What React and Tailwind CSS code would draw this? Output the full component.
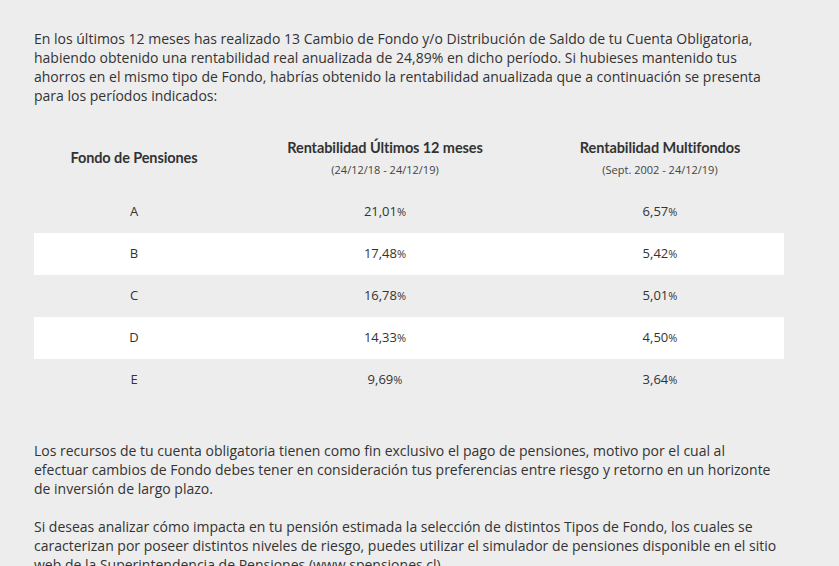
import React from 'react';

const rows = [
    { fondo: 'A', ultimos: '21,01', multi: '6,57' },
    { fondo: 'B', ultimos: '17,48', multi: '5,42' },
    { fondo: 'C', ultimos: '16,78', multi: '5,01' },
    { fondo: 'D', ultimos: '14,33', multi: '4,50' },
    { fondo: 'E', ultimos: '9,69', multi: '3,64' },
];

const Pct = ({ value }) => (
    <span>
        {value}
        <span className="text-[11px]">%</span>
    </span>
);

export default function App() {
    return (
        <div className="min-h-[566px] w-full overflow-hidden bg-[#ededed] font-['Open_Sans',sans-serif] text-[#333]">
            <div className="w-[760px] ml-[34px] pt-[29px]">
                <p className="text-[14px] leading-[19px]">
                    En los últimos 12 meses has realizado 13 Cambio de Fondo y/o Distribución de Saldo de tu Cuenta Obligatoria,<br />
                    habiendo obtenido una rentabilidad real anualizada de 24,89% en dicho período. Si hubieses mantenido tus<br />
                    ahorros en el mismo tipo de Fondo, habrías obtenido la rentabilidad anualizada que a continuación se presenta<br />
                    para los períodos indicados:
                </p>

                {/* tabla rentabilidad */}
                <table className="mt-[20px] w-[750px] table-fixed border-collapse">
                    <colgroup>
                        <col className="w-[200px]" />
                        <col className="w-[302px]" />
                        <col className="w-[248px]" />
                    </colgroup>
                    <thead>
                        <tr className="h-[66px]">
                            <th className="font-['Lato',sans-serif] text-[14.5px] font-bold tracking-[-0.1px] text-[#333] align-middle">
                                Fondo de Pensiones
                            </th>
                            <th className="align-middle">
                                <div className="font-['Lato',sans-serif] text-[14.5px] font-bold tracking-[-0.1px] leading-[16px]">Rentabilidad Últimos 12 meses</div>
                                <div className="mt-[7px] text-[11px] font-normal leading-[14px] text-[#444]">(24/12/18 - 24/12/19)</div>
                            </th>
                            <th className="align-middle">
                                <div className="font-['Lato',sans-serif] text-[14.5px] font-bold tracking-[-0.1px] leading-[16px]">Rentabilidad Multifondos</div>
                                <div className="mt-[7px] text-[11px] font-normal leading-[14px] text-[#444]">(Sept. 2002 - 24/12/19)</div>
                            </th>
                        </tr>
                    </thead>
                    <tbody>
                        {rows.map((row, i) => (
                            <tr key={row.fondo} className={`h-[42px] text-[13px] ${i % 2 === 1 ? 'bg-white' : ''}`}>
                                <td className="text-center align-middle">{row.fondo}</td>
                                <td className="text-center align-middle"><Pct value={row.ultimos} /></td>
                                <td className="text-center align-middle"><Pct value={row.multi} /></td>
                            </tr>
                        ))}
                    </tbody>
                </table>

                <p className="mt-[40px] text-[14px] leading-[19px]">
                    Los recursos de tu cuenta obligatoria tienen como fin exclusivo el pago de pensiones, motivo por el cual al<br />
                    efectuar cambios de Fondo debes tener en consideración tus preferencias entre riesgo y retorno en un horizonte<br />
                    de inversión de largo plazo.
                </p>
                <p className="mt-[19px] text-[14px] leading-[19px]">
                    Si deseas analizar cómo impacta en tu pensión estimada la selección de distintos Tipos de Fondo, los cuales se<br />
                    caracterizan por poseer distintos niveles de riesgo, puedes utilizar el simulador de pensiones disponible en el sitio<br />
                    web de la Superintendencia de Pensiones (www.spensiones.cl).
                </p>
            </div>
        </div>
    );
}
